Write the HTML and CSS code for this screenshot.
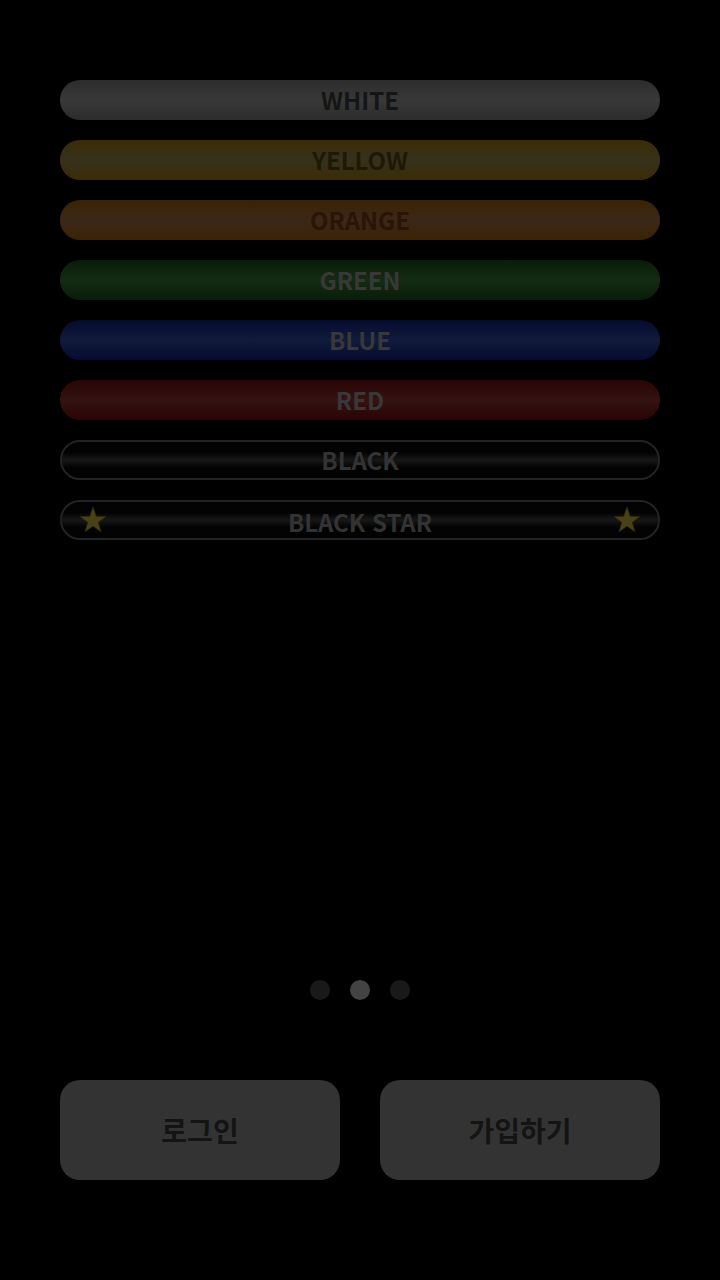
FILE: index.html
```html
<!DOCTYPE html>
<html lang="ko">
<head>
<meta charset="utf-8">
<link rel="stylesheet" href="styles.css">
</head>
<body>
<div class="screen">
  <div class="belts">
    <div class="belt white">WHITE</div>
    <div class="belt yellow">YELLOW</div>
    <div class="belt orange">ORANGE</div>
    <div class="belt green">GREEN</div>
    <div class="belt blue">BLUE</div>
    <div class="belt red">RED</div>
    <div class="belt black">BLACK</div>
    <div class="belt black star-belt">
      <svg class="star" viewBox="0 0 30 30"><polygon points="15,2 18.2,11.3 28,11.5 20.2,17.4 23,26.8 15,21.2 7,26.8 9.8,17.4 2,11.5 11.8,11.3"/></svg>
      <span>BLACK STAR</span>
      <svg class="star" viewBox="0 0 30 30"><polygon points="15,2 18.2,11.3 28,11.5 20.2,17.4 23,26.8 15,21.2 7,26.8 9.8,17.4 2,11.5 11.8,11.3"/></svg>
    </div>
  </div>
  <div class="dots">
    <span class="dot"></span>
    <span class="dot active"></span>
    <span class="dot"></span>
  </div>
  <div class="actions">
    <button class="btn">로그인</button>
    <button class="btn">가입하기</button>
  </div>
</div>
</body>
</html>
```
FILE: styles.css
```css
html, body {
  margin: 0;
  padding: 0;
  background: #000;
}
body {
  font-family: "Noto Sans CJK KR", "Noto Sans", sans-serif;
  width: 720px;
  height: 1280px;
  overflow: hidden;
}
.screen {
  padding: 80px 60px 0;
  display: flex;
  flex-direction: column;
}
.belts {
  display: flex;
  flex-direction: column;
  gap: 20px;
}
.belt {
  height: 40px;
  border-radius: 20px;
  box-sizing: border-box;
  display: flex;
  align-items: center;
  justify-content: center;
  font-weight: 700;
  font-size: 24px;
  line-height: 1;
  padding-top: 0;
}
.white {
  background: linear-gradient(#2c2c2c, #383838 50%, #2c2c2c);
  color: #151515;
}
.yellow {
  background: linear-gradient(#3b2c04, #36311c 50%, #3b2c04);
  color: #1e1907;
}
.orange {
  background: linear-gradient(#3b2204, #3a2818 50%, #3b2204);
  color: #2a1307;
}
.green {
  background: linear-gradient(#081d08, #142b13 50%, #081d08);
  color: #383838;
}
.blue {
  background: linear-gradient(#050b2f, #111b3b 50%, #050b2f);
  color: #383838;
}
.red {
  background: linear-gradient(#290404, #341313 50%, #290404);
  color: #383838;
}
.black {
  background: linear-gradient(#020202, #030303 30%, #171717 50%, #030303 70%, #020202);
  border: 2px solid #232323;
  color: #333;
}
.star-belt {
  justify-content: space-between;
  padding: 4px 16px 0 16px;
}
.star {
  width: 30px;
  height: 30px;
  margin-top: -4px;
}
.star polygon {
  fill: #4a4217;
  stroke: #2c2708;
  stroke-width: 1;
}
.dots {
  margin-top: 440px;
  display: flex;
  justify-content: center;
  gap: 20px;
}
.dot {
  width: 20px;
  height: 20px;
  border-radius: 50%;
  background: #191919;
}
.dot.active {
  background: #434343;
}
.actions {
  margin-top: 80px;
  display: flex;
  gap: 40px;
}
.btn {
  flex: 1;
  height: 100px;
  border: none;
  border-radius: 20px;
  background: #333;
  color: #141414;
  font-family: "Noto Sans CJK KR", sans-serif;
  font-weight: 700;
  font-size: 28px;
  padding: 0;
}
```
